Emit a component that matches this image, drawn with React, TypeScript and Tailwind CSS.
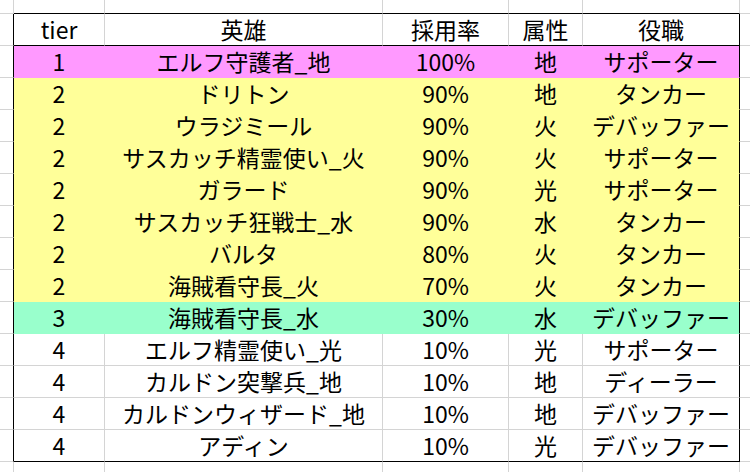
import React from "react";

type Fill = "pink" | "yellow" | "green" | "none";

type Row = {
  tier: string;
  hero: string;
  rate: string;
  attr: string;
  role: string;
  fill: Fill;
};

const rows: Row[] = [
  { tier: "1", hero: "エルフ守護者_地", rate: "100%", attr: "地", role: "サポーター", fill: "pink" },
  { tier: "2", hero: "ドリトン", rate: "90%", attr: "地", role: "タンカー", fill: "yellow" },
  { tier: "2", hero: "ウラジミール", rate: "90%", attr: "火", role: "デバッファー", fill: "yellow" },
  { tier: "2", hero: "サスカッチ精霊使い_火", rate: "90%", attr: "火", role: "サポーター", fill: "yellow" },
  { tier: "2", hero: "ガラード", rate: "90%", attr: "光", role: "サポーター", fill: "yellow" },
  { tier: "2", hero: "サスカッチ狂戦士_水", rate: "90%", attr: "水", role: "タンカー", fill: "yellow" },
  { tier: "2", hero: "バルタ", rate: "80%", attr: "火", role: "タンカー", fill: "yellow" },
  { tier: "2", hero: "海賊看守長_火", rate: "70%", attr: "火", role: "タンカー", fill: "yellow" },
  { tier: "3", hero: "海賊看守長_水", rate: "30%", attr: "水", role: "デバッファー", fill: "green" },
  { tier: "4", hero: "エルフ精霊使い_光", rate: "10%", attr: "光", role: "サポーター", fill: "none" },
  { tier: "4", hero: "カルドン突撃兵_地", rate: "10%", attr: "地", role: "ディーラー", fill: "none" },
  { tier: "4", hero: "カルドンウィザード_地", rate: "10%", attr: "地", role: "デバッファー", fill: "none" },
  { tier: "4", hero: "アディン", rate: "10%", attr: "光", role: "デバッファー", fill: "none" },
];

// background + gridline colour (a filled cell hides the sheet's gridlines)
const fillStyles: Record<Fill, { bg: string; right: string; bottom: string }> = {
  pink: { bg: "bg-[#ff99ff]", right: "border-r-[#ff99ff]", bottom: "border-b-[#ff99ff]" },
  yellow: { bg: "bg-[#ffff99]", right: "border-r-[#ffff99]", bottom: "border-b-[#ffff99]" },
  green: { bg: "bg-[#99ffcc]", right: "border-r-[#99ffcc]", bottom: "border-b-[#99ffcc]" },
  none: { bg: "bg-white", right: "border-r-[#d4d4d4]", bottom: "border-b-[#d4d4d4]" },
};

const Cell = ({
  text,
  fill,
  lastCol,
  blackBottom,
}: {
  text: string;
  fill: Fill;
  lastCol: boolean;
  blackBottom: boolean;
}) => {
  const f = fillStyles[fill];
  return (
    <div
      className={`flex items-center justify-center whitespace-nowrap border-r border-b ${f.bg} ${
        lastCol ? "border-r-black" : f.right
      } ${blackBottom ? "border-b-black" : f.bottom}`}
    >
      {text}
    </div>
  );
};

const EdgeLeft = ({ black }: { black?: boolean }) => (
  <div
    className={`border-r border-b border-b-[#d4d4d4] ${
      black ? "border-r-black" : "border-r-[#d4d4d4]"
    }`}
  />
);

const EdgeRight = () => <div className="border-b border-[#d4d4d4]" />;

export default function App() {
  const header = ["tier", "英雄", "採用率", "属性", "役職"];

  return (
    <div className="grid h-[472px] w-[750px] grid-cols-[14px_91px_278px_126px_74px_157px_1fr] grid-rows-[14px_repeat(14,32px)_1fr] overflow-hidden bg-white font-['Noto_Sans_CJK_JP',sans-serif] text-[23px] leading-none text-black">
      {/* row above the table */}
      <EdgeLeft />
      {header.map((h) => (
        <div key={h} className="border-r border-b border-r-[#d4d4d4] border-b-black" />
      ))}
      <EdgeRight />

      {/* header */}
      <EdgeLeft black />
      {header.map((h, i) => (
        <Cell key={h} text={h} fill="none" lastCol={i === 4} blackBottom />
      ))}
      <EdgeRight />

      {rows.map((r, ri) => {
        const cells = [r.tier, r.hero, r.rate, r.attr, r.role];
        const last = ri === rows.length - 1;
        return (
          <React.Fragment key={ri}>
            <EdgeLeft black />
            {cells.map((c, ci) => (
              <Cell key={ci} text={c} fill={r.fill} lastCol={ci === 4} blackBottom={last} />
            ))}
            <EdgeRight />
          </React.Fragment>
        );
      })}

      {/* row below the table */}
      <div className="border-r border-[#d4d4d4]" />
      {header.map((h) => (
        <div key={h} className="border-r border-[#d4d4d4]" />
      ))}
      <div />
    </div>
  );
}
